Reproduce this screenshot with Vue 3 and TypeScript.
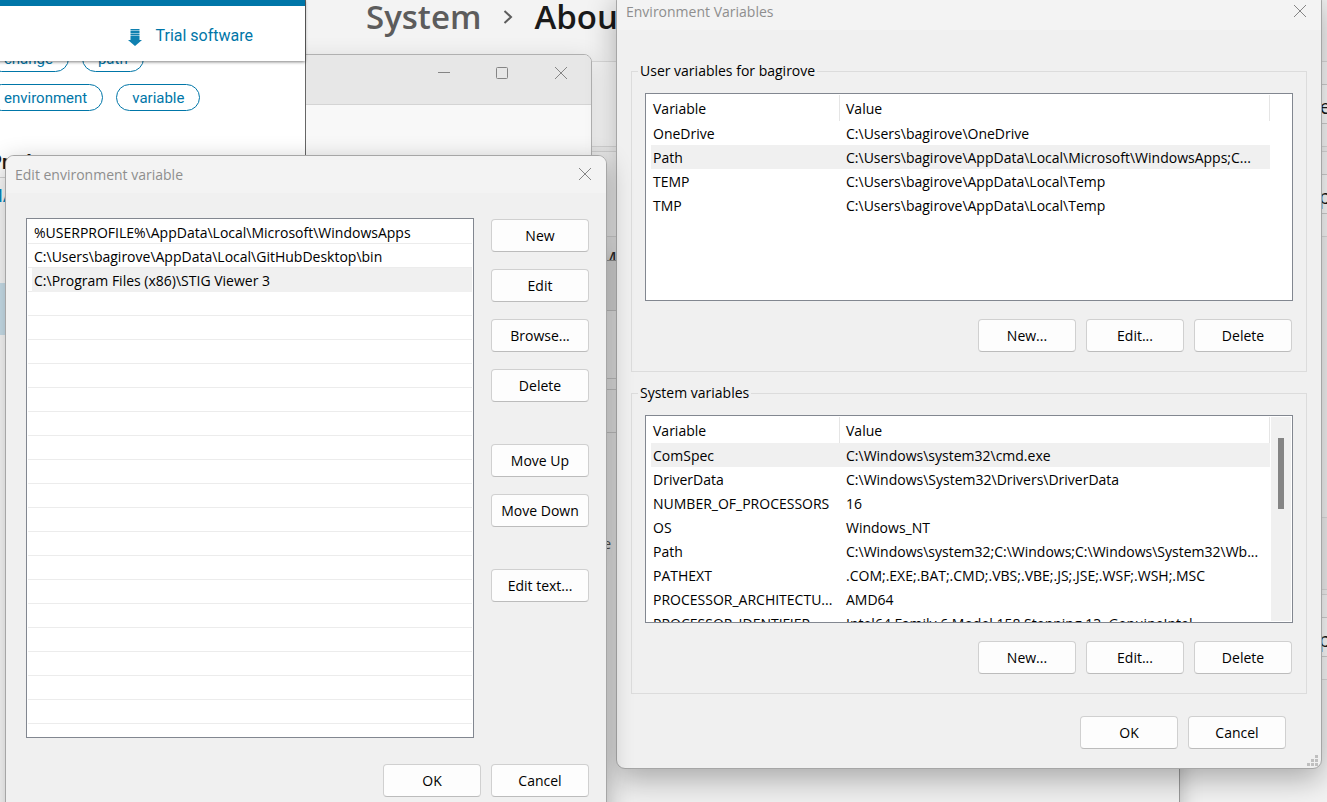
<script setup lang="ts">
import { ref } from 'vue'

interface Variable {
  name: string
  value: string
}

interface VariableGroup {
  title: string
  selected: string
  scroll: boolean
  rows: Variable[]
}

const groups = ref<VariableGroup[]>([
  {
    title: 'User variables for bagirove',
    selected: 'Path',
    scroll: false,
    rows: [
      { name: 'OneDrive', value: 'C:\\Users\\bagirove\\OneDrive' },
      { name: 'Path', value: 'C:\\Users\\bagirove\\AppData\\Local\\Microsoft\\WindowsApps;C...' },
      { name: 'TEMP', value: 'C:\\Users\\bagirove\\AppData\\Local\\Temp' },
      { name: 'TMP', value: 'C:\\Users\\bagirove\\AppData\\Local\\Temp' },
    ],
  },
  {
    title: 'System variables',
    selected: 'ComSpec',
    scroll: true,
    rows: [
      { name: 'ComSpec', value: 'C:\\Windows\\system32\\cmd.exe' },
      { name: 'DriverData', value: 'C:\\Windows\\System32\\Drivers\\DriverData' },
      { name: 'NUMBER_OF_PROCESSORS', value: '16' },
      { name: 'OS', value: 'Windows_NT' },
      { name: 'Path', value: 'C:\\Windows\\system32;C:\\Windows;C:\\Windows\\System32\\Wb...' },
      { name: 'PATHEXT', value: '.COM;.EXE;.BAT;.CMD;.VBS;.VBE;.JS;.JSE;.WSF;.WSH;.MSC' },
      { name: 'PROCESSOR_ARCHITECTU...', value: 'AMD64' },
      { name: 'PROCESSOR_IDENTIFIER', value: 'Intel64 Family 6 Model 158 Stepping 13, GenuineIntel' },
    ],
  },
])

const paths: string[] = [
  '%USERPROFILE%\\AppData\\Local\\Microsoft\\WindowsApps',
  'C:\\Users\\bagirove\\AppData\\Local\\GitHubDesktop\\bin',
  'C:\\Program Files (x86)\\STIG Viewer 3',
]
const selectedPath = ref(2)
const emptyRows = 18

const actions: string[][] = [
  ['New', 'Edit', 'Browse...', 'Delete'],
  ['Move Up', 'Move Down'],
  ['Edit text...'],
]
</script>

<template>
  <main class="desktop">
    <section class="settings">
      <h1 class="crumbs">
        <span class="parent">System</span>
        <svg class="chevron" viewBox="0 0 10 16" aria-hidden="true"><path d="M1.5 2 8 8l-6.500 6" /></svg>
        <span>About</span>
      </h1>
      <div class="card"><button class="card-button">Rename</button></div>
      <div class="card"><button class="card-button">Backup</button></div>
      <p class="model">M</p>
      <div class="card lower"></div>
      <div class="card"><button class="card-button">Backup</button></div>
    </section>

    <section class="properties">
      <div class="properties-bar"></div>
      <div class="properties-tabs"></div>
      <div class="properties-group"></div>
      <p class="properties-text">e</p>
    </section>

    <section class="explorer">
      <header class="explorer-bar">
        <button class="caption" aria-label="Minimize">
          <svg viewBox="0 0 12 12"><path d="M0 5.500h12" /></svg>
        </button>
        <button class="caption" aria-label="Maximize">
          <svg viewBox="0 0 12 12"><rect x=".5" y=".5" width="11" height="11" rx="1" /></svg>
        </button>
        <button class="caption" aria-label="Close">
          <svg viewBox="0 0 12 12"><path d="m0 0 12 12M12 0 0 12" /></svg>
        </button>
      </header>
    </section>

    <section class="browser">
      <header class="site-bar">
        <a class="trial" href="#">
          <svg viewBox="0 0 14 17" aria-hidden="true">
            <path d="M2.500 0h9v1.500h-9zM2.500 2h9v2h-9zM2.500 4.500h9v1.500h-9zM2.500 6.500h9V11H14l-7 6-7-6h2.500z" />
          </svg>
          Trial software
        </a>
      </header>
      <div class="tags first"><a class="tag" href="#">change</a><a class="tag" href="#">path</a></div>
      <div class="tags"><a class="tag" href="#">environment</a><a class="tag" href="#">variable</a></div>
      <h2 class="products">Products</h2>
      <a class="product" href="#">MA</a>
      <div class="banner"></div>
    </section>

    <section class="dialog env" role="dialog" aria-labelledby="env-title">
      <header class="title-bar">
        <h2 id="env-title">Environment Variables</h2>
        <button class="close" aria-label="Close">
          <svg viewBox="0 0 12 12"><path d="m0 0 12 12M12 0 0 12" /></svg>
        </button>
      </header>
      <div class="env-body">
        <fieldset v-for="group in groups" :key="group.title" class="group">
          <legend>{{ group.title }}</legend>
          <div class="list">
            <table>
              <thead>
                <tr><th class="name-col" scope="col">Variable</th><th scope="col">Value</th></tr>
              </thead>
              <tbody>
                <tr
                  v-for="row in group.rows"
                  :key="row.name"
                  :class="{ selected: row.name === group.selected }"
                  @click="group.selected = row.name"
                >
                  <td>{{ row.name }}</td>
                  <td>{{ row.value }}</td>
                </tr>
              </tbody>
            </table>
            <div v-if="group.scroll" class="track"><div class="thumb"></div></div>
          </div>
          <div class="buttons group-buttons">
            <button class="btn">New...</button>
            <button class="btn">Edit...</button>
            <button class="btn">Delete</button>
          </div>
        </fieldset>
        <footer class="buttons footer">
          <button class="btn">OK</button>
          <button class="btn">Cancel</button>
        </footer>
      </div>
      <svg class="grip" viewBox="0 0 11 11" aria-hidden="true">
        <path d="M8 0h3v3H8zM4 4h3v3H4zM8 4h3v3H8zM0 8h3v3H0zM4 8h3v3H4zM8 8h3v3H8z" />
      </svg>
    </section>

    <section class="dialog edit" role="dialog" aria-labelledby="edit-title">
      <header class="title-bar">
        <h2 id="edit-title">Edit environment variable</h2>
        <button class="close" aria-label="Close">
          <svg viewBox="0 0 12 12"><path d="m0 0 12 12M12 0 0 12" /></svg>
        </button>
      </header>
      <div class="edit-body">
        <ul class="paths">
          <li
            v-for="(path, i) in paths"
            :key="path"
            :class="{ selected: i === selectedPath }"
            @click="selectedPath = i"
          ><span>{{ path }}</span></li>
          <li v-for="n in emptyRows" :key="n" aria-hidden="true"></li>
        </ul>
        <div class="actions">
          <div v-for="(set, i) in actions" :key="i" class="action-set">
            <button v-for="label in set" :key="label" class="btn">{{ label }}</button>
          </div>
        </div>
      </div>
      <footer class="buttons edit-footer">
        <button class="btn">OK</button>
        <button class="btn">Cancel</button>
      </footer>
    </section>
  </main>
</template>

<style>
body {
  margin: 0;
  overflow: hidden;
}
</style>

<style scoped>
* {
  box-sizing: border-box;
}

.desktop {
  position: relative;
  height: 100vh;
  overflow: hidden;
  background: #f3f3f3;
  color: #000;
  font: 14px/24px "Open Sans", "Noto Sans", sans-serif;
}

button {
  font: inherit;
  color: inherit;
  padding: 0;
}

h1,
h2,
p,
ul {
  margin: 0;
  padding: 0;
}

svg {
  display: block;
}

/* Settings page */
.settings {
  padding-left: 366px;
}

.crumbs {
  display: flex;
  align-items: center;
  height: 34px;
  margin-bottom: 27px;
  font-size: 33px;
  font-weight: 600;
  line-height: 34px;
  color: #1a1a1a;
}

.parent {
  color: #5c5c5c;
}

.chevron {
  width: 10px;
  height: 16px;
  margin: 0 21px 0 22px;
  fill: none;
  stroke: #5c5c5c;
  stroke-width: 2;
}

.card {
  display: flex;
  align-items: center;
  justify-content: flex-end;
  height: 86px;
  margin: 0 -40px 4px 0;
  border: 1px solid #dcdcdc;
  background: #f8f8f8;
}

.card-button {
  direction: rtl;
  width: 60px;
  height: 40px;
  padding: 5px 34px 0 0;
  border: 1px solid #d0d0d0;
  background: #fcfcfc;
  color: #1a1a1a;
  font-size: 20px;
  text-align: right;
}

.model {
  width: 251px;
  padding-top: 6px;
  color: #333;
  font-size: 20px;
  text-align: right;
  height: 276px;
}

.card.lower {
  height: 73px;
  background: #eee;
}

/* System properties window */
.properties {
  position: absolute;
  left: 420px;
  top: 260px;
  width: 760px;
  height: 600px;
  border: 1px solid #999;
  background: #f0f0f0;
  box-shadow: 0 6px 20px rgba(0, 0, 0, 0.25);
}

.properties-bar {
  height: 50px;
  border-bottom: 1px solid #c8c8c8;
  background: #e3e3e3;
}

.properties-tabs {
  height: 68px;
  margin-bottom: 10px;
  border-bottom: 1px solid #ccc;
}

.properties-group {
  height: 44px;
  border: solid #ccc;
  border-width: 1px 0;
}

.properties-text {
  width: 190px;
  padding-top: 99px;
  color: #555;
  text-align: right;
}

/* Explorer window */
.explorer {
  position: absolute;
  left: 200px;
  top: 54px;
  width: 392px;
  height: 500px;
  border: 1px solid #b0b0b0;
  border-radius: 8px;
  background: #f8f8f8;
  box-shadow: 0 6px 24px rgba(0, 0, 0, 0.14);
  overflow: hidden;
}

.explorer-bar {
  display: flex;
  justify-content: flex-end;
  height: 50px;
  border-bottom: 1px solid #d4d4d4;
  background: #e7e7e7;
}

.caption {
  display: flex;
  justify-content: center;
  width: 58px;
  height: 36px;
  padding-top: 12px;
  border: 0;
  background: none;
}

.caption:last-child {
  width: 60px;
}

.caption svg,
.close svg {
  width: 12px;
  height: 12px;
  overflow: visible;
  fill: none;
  stroke: #858585;
}

/* Browser window */
.browser {
  position: absolute;
  left: -13px;
  top: 0;
  width: 319px;
  height: 100%;
  border-right: 1px solid #666;
  background: #fff;
  font-family: Roboto, sans-serif;
}

.site-bar {
  position: relative;
  display: flex;
  justify-content: flex-end;
  height: 61px;
  padding: 18px 52px 0 0;
  border-top: 6px solid #0076a8;
  background: #fff;
  box-shadow: 0 1px 3px rgba(0, 0, 0, 0.5);
}

.trial {
  display: flex;
  gap: 14px;
  height: 24px;
  color: #0076a8;
  font-size: 16px;
  text-decoration: none;
}

.trial svg {
  width: 14px;
  height: 17px;
  margin-top: 5px;
  fill: #0f80b0;
}

.tags {
  display: flex;
  gap: 13px;
  margin-bottom: 12px;
  padding-left: 1px;
}

.tags.first {
  margin-top: -16px;
}

.tag {
  height: 27px;
  padding: 0 15px;
  border: 1px solid #0076a8;
  border-radius: 14px;
  color: #0076a8;
  font-size: 15px;
  line-height: 26px;
  text-decoration: none;
}

.products {
  margin-top: 36px;
  height: 31px;
  padding-left: 2px;
  border-bottom: 1px solid #d8d8d8;
  font: 700 20px/30px Roboto, sans-serif;
  color: #1a1a1a;
}

.product {
  display: block;
  height: 105px;
  padding-top: 6px;
  color: #0088c0;
  font-size: 18px;
  text-decoration: none;
}

.banner {
  height: 52px;
  background: #cfe6f2;
}

/* Dialogs */
.dialog {
  position: absolute;
  border: 1px solid #a6a6a6;
  border-radius: 9px;
  background: #f0f0f0;
}

.title-bar {
  display: flex;
  align-items: center;
  justify-content: space-between;
  height: 37px;
  padding: 0 15px 0 9px;
  border-radius: 8px 8px 0 0;
  background: #f3f3f3;
}

.title-bar h2 {
  color: #8e8e8e;
  font-size: 14px;
  font-weight: 400;
}

.close {
  padding-bottom: 2px;
  border: 0;
  background: none;
}

.btn {
  width: 98px;
  height: 33px;
  border: 1px solid #d0d0d0;
  border-bottom-color: #bcbcbc;
  border-radius: 4px;
  background: #fdfdfd;
  white-space: nowrap;
}

.buttons {
  display: flex;
  justify-content: flex-end;
  gap: 10px;
}

/* Environment variables */
.env {
  left: 616px;
  top: -8px;
  width: 706px;
  box-shadow: 0 10px 30px rgba(0, 0, 0, 0.3);
}

.env-body {
  display: flex;
  flex-direction: column;
  gap: 9px;
  padding: 29px 14px 19px;
}

.group {
  min-width: 0;
  margin: 0;
  padding: 10px 13px 19px;
  border: 1px solid #dcdcdc;
}

.group legend {
  margin-left: -7px;
  padding: 0 2px;
}

.group-buttons {
  padding-right: 1px;
}

.list {
  display: flex;
  justify-content: space-between;
  height: 208px;
  margin-bottom: 18px;
  padding: 1px 1px 1px 5px;
  border: 1px solid #828790;
  background: #fff;
  overflow: hidden;
}

table {
  align-self: flex-start;
  width: 619px;
  border-spacing: 0;
  table-layout: fixed;
}

th,
td {
  height: 24px;
  padding: 2px 0 0 2px;
  font-weight: 400;
  line-height: 22px;
  text-align: left;
  white-space: nowrap;
}

th {
  height: 26px;
  border-right: 1px solid #e5e5e5;
}

.name-col {
  width: 189px;
}

th + th,
td + td {
  padding-left: 6px;
}

.selected td {
  background: #f0f0f0;
}

.track {
  width: 20px;
  padding: 21px 7px 0;
  background: #f0f0f0;
}

.thumb {
  height: 71px;
  background: #858585;
}

.footer {
  padding: 13px 21px 0 0;
}

.grip {
  position: absolute;
  right: 3px;
  bottom: 2px;
  width: 11px;
  height: 11px;
  fill: #bfbfbf;
}

/* Edit environment variable */
.edit {
  left: 5px;
  top: 155px;
  width: 602px;
  height: 680px;
  box-shadow: 0 8px 26px rgba(0, 0, 0, 0.3);
}

.edit-body {
  display: flex;
  justify-content: space-between;
  padding: 25px 17px 0 20px;
}

.paths {
  width: 448px;
  height: 520px;
  padding: 0 1px;
  border: 1px solid #828790;
  background: #fff;
  list-style: none;
}

.paths li {
  height: 24px;
  padding-left: 4px;
  border-bottom: 1px solid #ececec;
}

.paths li:first-child {
  height: 25px;
  padding-top: 1px;
}

.paths span {
  display: block;
  height: 24px;
  padding: 2px 0 0 2px;
  line-height: 22px;
}

.paths .selected span {
  background: #f0f0f0;
}

.actions {
  display: flex;
  flex-direction: column;
  gap: 42px;
  padding-top: 1px;
}

.action-set {
  display: flex;
  flex-direction: column;
  gap: 17px;
}

.edit-footer {
  padding: 26px 17px 0 0;
}
</style>
